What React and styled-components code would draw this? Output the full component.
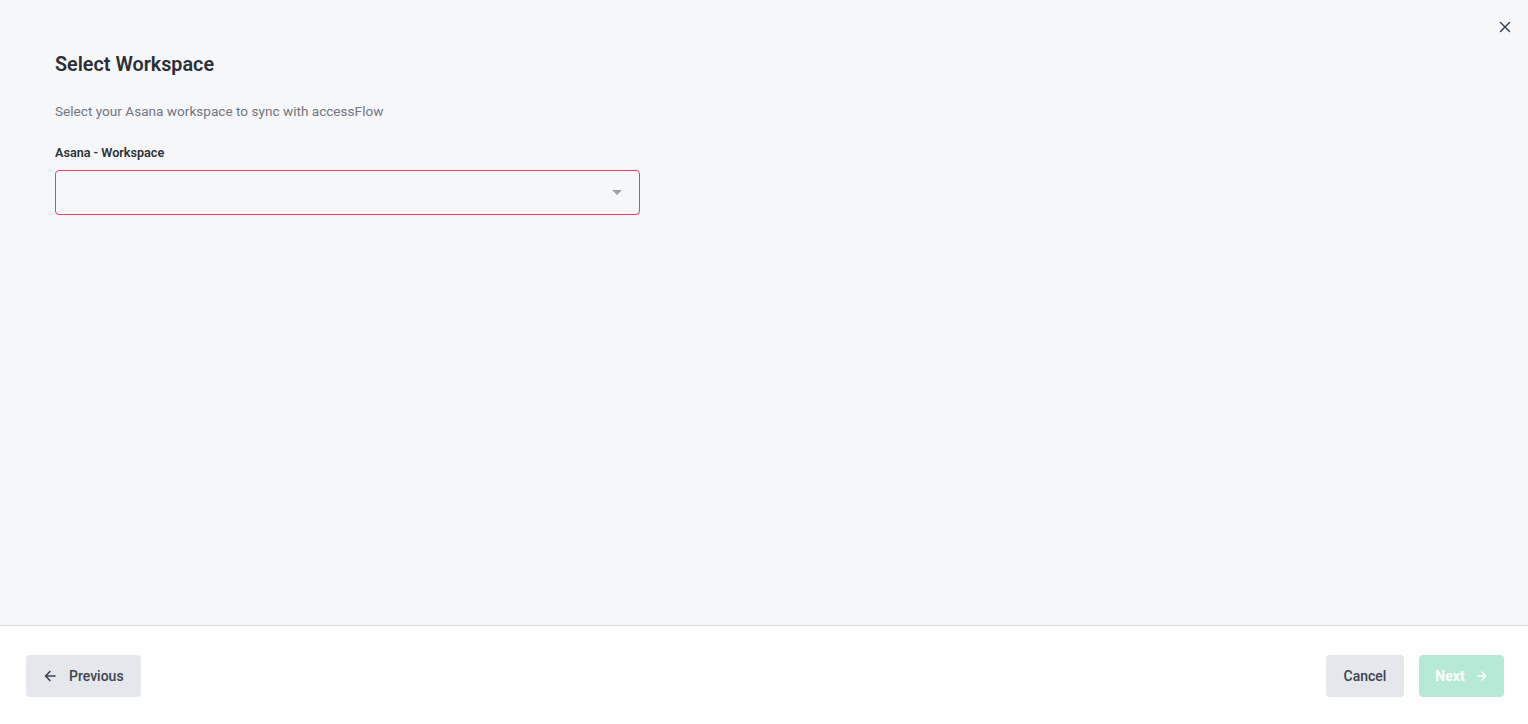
import React from 'react';
import styled, { createGlobalStyle } from 'styled-components';

const GlobalStyle = createGlobalStyle`
  html, body, #root { height: 100%; }
  body {
    margin: 0;
    font-family: Roboto, "Liberation Sans", sans-serif;
    background: #ffffff;
  }
  * { box-sizing: border-box; }
`;

const App = () => {
    return (
        <>
            <GlobalStyle />
            <Page>
                <Body>
                    <CloseButton aria-label="close">
                        <svg width="12" height="12" viewBox="0 0 12 12">
                            <path d="M1.5 1.5 L10.5 10.5 M10.5 1.5 L1.5 10.5" stroke="#2f3a4a" strokeWidth="1.4" strokeLinecap="round" />
                        </svg>
                    </CloseButton>
                    <Title>Select Workspace</Title>
                    <Subtitle>Select your Asana workspace to sync with accessFlow</Subtitle>
                    <Label>Asana - Workspace</Label>
                    <Select>
                        <Caret />
                    </Select>
                </Body>
                <Footer>
                    <Button variant="grey">
                        <svg width="14" height="14" viewBox="0 0 14 14">
                            <path d="M12 7 H2.5 M7 2.5 L2.5 7 L7 11.5" stroke="#3b4350" strokeWidth="1.6" fill="none" strokeLinecap="round" strokeLinejoin="round" />
                        </svg>
                        Previous
                    </Button>
                    <Actions>
                        <Button variant="grey">Cancel</Button>
                        <Button variant="green">
                            Next
                            <svg width="12" height="12" viewBox="0 0 14 14">
                                <path d="M2 7 H11.5 M7 2.5 L11.5 7 L7 11.5" stroke="#ffffff" strokeWidth="1.8" fill="none" strokeLinecap="round" strokeLinejoin="round" />
                            </svg>
                        </Button>
                    </Actions>
                </Footer>
            </Page>
        </>
    )
}

const Page = styled.div`
    display: flex;
    flex-direction: column;
    height: 724px;
`
const Body = styled.div`
    position: relative;
    flex: 1;
    background-color: #f6f7f9;
    border-bottom: 1px solid #dcdee2;
    padding: 53px 55px 0;
    display: flex;
    flex-direction: column;
`
const CloseButton = styled.button`
    position: absolute;
    top: 20px;
    right: 16px;
    width: 14px;
    height: 14px;
    padding: 0;
    border: none;
    background: none;
    display: flex;
    align-items: center;
    justify-content: center;
    cursor: pointer;
`
const Title = styled.h1`
    margin: 0;
    font-size: 19.8px;
    font-weight: 600;
    color: #2b2f36;
    line-height: 24px;
`
const Subtitle = styled.p`
    margin: 25px 0 0;
    font-size: 13.6px;
    color: #72767d;
    line-height: 18px;
`
const Label = styled.label`
    margin-top: 24px;
    font-size: 12.6px;
    font-weight: 600;
    color: #2b2f36;
    line-height: 17px;
`
const Select = styled.div`
    margin-top: 9px;
    width: 585px;
    height: 45px;
    border: 1px solid #f03a62;
    border-radius: 4px;
    display: flex;
    align-items: center;
    justify-content: flex-end;
    padding-right: 17px;
`
const Caret = styled.span`
    width: 0;
    height: 0;
    border-left: 5px solid transparent;
    border-right: 5px solid transparent;
    border-top: 5px solid #9a9eae;
`
const Footer = styled.div`
    height: 98px;
    background: #ffffff;
    display: flex;
    align-items: center;
    justify-content: space-between;
    padding: 2px 24px 0 26px;
`
const Actions = styled.div`
    display: flex;
    gap: 15px;
`
const Button = styled.button`
    height: 42px;
    border: none;
    border-radius: 4px;
    padding: 0 ${p => (p.variant === 'green' ? '16px' : '17px')};
    display: flex;
    align-items: center;
    gap: ${p => (p.variant === 'green' ? '11px' : '12px')};
    min-width: ${p => (p.variant === 'green' ? '85px' : '78px')};
    justify-content: center;
    font-family: Roboto, "Liberation Sans", sans-serif;
    font-size: 14px;
    cursor: pointer;
    background: ${p => (p.variant === 'green' ? '#b6ead4' : '#e4e7ec')};
    color: ${p => (p.variant === 'green' ? '#ffffff' : '#3b4350')};
    font-weight: ${p => (p.variant === 'green' ? 700 : 500)};
`

export default App
